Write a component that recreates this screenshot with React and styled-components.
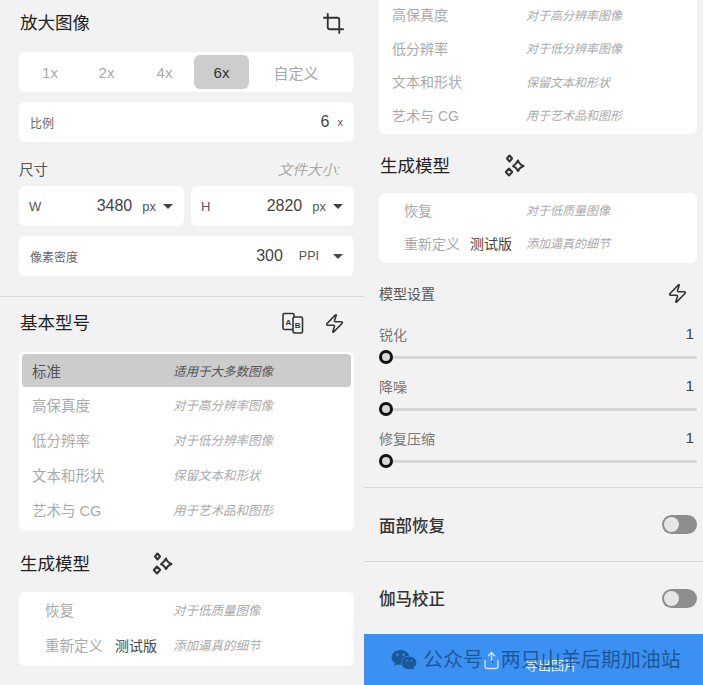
import styled, { createGlobalStyle } from 'styled-components';
import { Crop, Zap, Share } from 'lucide-react';
import { FaWeixin } from 'react-icons/fa';

const baseModels = [
  { name: '标准', desc: '适用于大多数图像', active: true },
  { name: '高保真度', desc: '对于高分辨率图像' },
  { name: '低分辨率', desc: '对于低分辨率图像' },
  { name: '文本和形状', desc: '保留文本和形状' },
  { name: '艺术与 CG', desc: '用于艺术品和图形' },
];
const genModels = [
  { name: '恢复', desc: '对于低质量图像' },
  { name: '重新定义', desc: '添加逼真的细节', badge: '测试版' },
];
const sliders = ['锐化', '降噪', '修复压缩'];

const SparkIcon = ({ size = 24 }) => (
  <svg width={size} height={size} viewBox="0 0 24 24" fill="none" stroke="#333" strokeWidth="2" strokeLinejoin="round">
    <path d="M7.5 1.5 L10 4.5 L7.5 7.5 L5 4.5 Z" />
    <path d="M16 6.5 Q17 10 21.5 12 Q17.5 13.5 16 17 Q14.5 13.5 11 12 Q14.5 10 16 6.5 Z" />
    <path d="M7 14.5 L10.2 18 L7 21.5 L3.8 18 Z" />
  </svg>
);

const TranslateIcon = () => (
  <svg width="22" height="22" viewBox="0 0 22 22" fill="none" stroke="#333" strokeWidth="1.6">
    <rect x="1" y="1.5" width="11" height="16" rx="1.5" />
    <rect x="11" y="5" width="9.5" height="16" rx="1.5" fill="#f2f2f2" />
    <text x="3.4" y="12.5" fontSize="8" fontWeight="700" fill="#333" stroke="none" fontFamily="Liberation Sans">A</text>
    <text x="12.8" y="16" fontSize="8" fontWeight="700" fill="#333" stroke="none" fontFamily="Liberation Sans">B</text>
  </svg>
);

const ModelList = ({ items, compact, right }) => (
  <ModelCard $compact={compact} $right={right}>
    {items.map(item => (
      <ModelRow key={item.name} $active={item.active} $right={right}>
        <ModelName $active={item.active} $indent={compact} $right={right}>
          {item.name}
          {item.badge && <Badge $right={right}>{item.badge}</Badge>}
        </ModelName>
        <ModelDesc $active={item.active} $right={right}>{item.desc}</ModelDesc>
      </ModelRow>
    ))}
  </ModelCard>
);

const App = () => {
  return (
    <>
      <GlobalStyle />
      <Page>
        <LeftColumn>
          <TopSection>
            <Header>
              <Title>放大图像</Title>
              <Crop size={23} color="#333" strokeWidth={1.9} />
            </Header>
            <Segment>
              <SegmentItem $w={56}>1x</SegmentItem>
              <SegmentItem $w={57}>2x</SegmentItem>
              <SegmentItem $w={59}>4x</SegmentItem>
              <SegmentItem $w={55} $active>6x</SegmentItem>
              <SegmentItem $w={94}>自定义</SegmentItem>
            </Segment>
            <FieldCard>
              <FieldLabel>比例</FieldLabel>
              <ValueGroup>
                <Value>6</Value>
                <Unit $small>x</Unit>
              </ValueGroup>
            </FieldCard>
            <SizeHeader>
              <SizeLabel>尺寸</SizeLabel>
              <FileSize>文件大小:</FileSize>
            </SizeHeader>
            <SizeRow>
              <SizeField>
                <SizeName>W</SizeName>
                <ValueGroup>
                  <Value>3480</Value>
                  <Unit>px</Unit>
                  <Caret />
                </ValueGroup>
              </SizeField>
              <SizeField>
                <SizeName>H</SizeName>
                <ValueGroup>
                  <Value>2820</Value>
                  <Unit>px</Unit>
                  <Caret />
                </ValueGroup>
              </SizeField>
            </SizeRow>
            <FieldCard>
              <FieldLabel>像素密度</FieldLabel>
              <ValueGroup>
                <Value>300</Value>
                <PpiUnit>PPI</PpiUnit>
                <Caret />
              </ValueGroup>
            </FieldCard>
          </TopSection>
          <ModelSection>
            <ModelHeader>
              <Title>基本型号</Title>
              <HeaderIcons>
                <TranslateIcon />
                <Zap size={21} color="#333" strokeWidth={1.8} />
              </HeaderIcons>
            </ModelHeader>
            <ModelList items={baseModels} />
            <GenHeader>
              <Title>生成模型</Title>
              <SparkIcon />
            </GenHeader>
            <ModelList items={genModels} compact />
          </ModelSection>
        </LeftColumn>

        <RightColumn>
          <RightTop>
            <ModelCardTop>
              {baseModels.slice(1).map(item => (
                <ModelRowTop key={item.name}>
                  <ModelName $right>{item.name}</ModelName>
                  <ModelDesc $right>{item.desc}</ModelDesc>
                </ModelRowTop>
              ))}
            </ModelCardTop>
            <GenHeaderRight>
              <Title>生成模型</Title>
              <SparkIcon />
            </GenHeaderRight>
            <ModelList items={genModels} compact right />
            <SettingsHeader>
              <SettingsTitle>模型设置</SettingsTitle>
              <Zap size={21} color="#333" strokeWidth={1.8} />
            </SettingsHeader>
            {sliders.map(name => (
              <SliderBlock key={name}>
                <SliderHead>
                  <SliderLabel>{name}</SliderLabel>
                  <SliderValue>1</SliderValue>
                </SliderHead>
                <SliderTrack>
                  <SliderKnob />
                </SliderTrack>
              </SliderBlock>
            ))}
          </RightTop>
          <ToggleSection>
            <ToggleTitle>面部恢复</ToggleTitle>
            <Toggle />
          </ToggleSection>
          <ToggleSection $last>
            <ToggleTitle>伽马校正</ToggleTitle>
            <Toggle />
          </ToggleSection>
          <ExportBar>
            <ExportIcon>
              <Share size={19} color="#cfe4fb" strokeWidth={1.8} />
            </ExportIcon>
            <ExportText>导出图片</ExportText>
            <Watermark>
              <FaWeixin size={26} />
              <WatermarkText>公众号 · 两只山羊后期加油站</WatermarkText>
            </Watermark>
          </ExportBar>
        </RightColumn>
      </Page>
    </>
  );
};

export default App;

//style
const FONT = `"Liberation Sans", "Noto Sans CJK SC", sans-serif`;

const GlobalStyle = createGlobalStyle`
  html, body {
    margin: 0;
    background: #f2f2f2;
    font-family: ${FONT};
  }
  * { box-sizing: border-box; }
`;
const Page = styled.div`
  width: 703px;
  height: 685px;
  display: grid;
  grid-template-columns: 364px 339px;
  overflow: hidden;
  background: #f2f2f2;
  color: #333;
`;
const LeftColumn = styled.div`
  display: flex;
  flex-direction: column;
`;
const TopSection = styled.div`
  height: 297px;
  padding: 0 10px 0 19px;
  border-bottom: 1px solid #d6d6d6;
`;
const Header = styled.div`
  height: 52px;
  padding: 0 9px 6px 0;
  display: flex;
  align-items: center;
  justify-content: space-between;
`;
const Title = styled.div`
  padding: 0 0 3px 1px;
  font-size: 17.5px;
  font-weight: 400;
  color: #222;
`;
const Segment = styled.div`
  height: 40px;
  padding: 3px 0 3px 3px;
  display: flex;
  background: #fff;
  border-radius: 6px;
`;
const SegmentItem = styled.div`
  width: ${p => p.$w}px;
  display: flex;
  align-items: center;
  justify-content: center;
  font-size: 15px;
  border-radius: 6px;
  color: ${p => (p.$active ? '#333' : '#a8a8a8')};
  background: ${p => (p.$active ? '#cdcdcd' : 'transparent')};
`;
const FieldCard = styled.div`
  height: 40px;
  margin-top: 10px;
  padding: 0 11px 0 11px;
  display: flex;
  align-items: center;
  justify-content: space-between;
  background: #fff;
  border-radius: 6px;
`;
const FieldLabel = styled.div`
  font-size: 12px;
  color: #666;
`;
const ValueGroup = styled.div`
  display: flex;
  align-items: center;
`;
const Value = styled.div`
  font-size: 16px;
  color: #444;
`;
const Unit = styled.div`
  margin-left: ${p => (p.$small ? '8px' : '10px')};
  font-size: ${p => (p.$small ? '11px' : '13px')};
  color: #555;
`;
const PpiUnit = styled.div`
  margin: 0 7px 0 16px;
  font-size: 12.5px;
  color: #555;
`;
const Caret = styled.div`
  margin-left: 7px;
  width: 0;
  height: 0;
  border-left: 5px solid transparent;
  border-right: 5px solid transparent;
  border-top: 5.5px solid #444;
`;
const SizeHeader = styled.div`
  height: 44px;
  padding: 9px 14px 0 0;
  display: flex;
  align-items: center;
  justify-content: space-between;
`;
const SizeLabel = styled.div`
  font-size: 14.5px;
  color: #555;
`;
const FileSize = styled.div`
  font-size: 14.5px;
  font-style: italic;
  color: #aaa;
`;
const SizeRow = styled.div`
  display: grid;
  grid-template-columns: 165px 163px;
  gap: 7px;
`;
const SizeField = styled.div`
  height: 40px;
  padding: 0 11px 0 10px;
  display: flex;
  align-items: center;
  justify-content: space-between;
  background: #fff;
  border-radius: 6px;
`;
const SizeName = styled.div`
  font-size: 13px;
  color: #555;
`;
const ModelSection = styled.div`
  padding: 0 10px 0 19px;
`;
const ModelHeader = styled.div`
  height: 55px;
  padding: 0 9px 3px 0;
  display: flex;
  align-items: center;
  justify-content: space-between;
`;
const HeaderIcons = styled.div`
  display: flex;
  align-items: center;
  gap: 20px;
`;
const ModelCard = styled.div`
  padding: ${p => (p.$compact ? '0 3px 4px' : '2px 3px 4px')};
  background: #fff;
  border-radius: 6px;
`;
const ModelRow = styled.div`
  height: ${p => (p.$active ? '33px' : p.$right ? '33px' : '35px')};
  padding-left: 10px;
  display: grid;
  grid-template-columns: ${p => (p.$right ? '134px' : '141px')} 1fr;
  align-items: center;
  border-radius: 4px;
  background: ${p => (p.$active ? '#cccccc' : 'transparent')};
`;
const ModelName = styled.div`
  padding-left: ${p => (p.$indent ? (p.$right ? '12px' : '13px') : '0')};
  display: flex;
  align-items: center;
  font-size: ${p => (p.$right ? '14px' : '14.5px')};
  white-space: nowrap;
  color: ${p => (p.$active ? '#555' : '#aaa')};
`;
const Badge = styled.span`
  margin-left: ${p => (p.$right ? '10px' : '12px')};
  font-size: 14px;
  color: #444;
`;
const ModelDesc = styled.div`
  font-size: ${p => (p.$right ? '12px' : '12.5px')};
  font-style: italic;
  white-space: nowrap;
  color: ${p => (p.$active ? '#555' : '#aaa')};
`;
const GenHeader = styled.div`
  height: 61px;
  padding-top: 4px;
  display: flex;
  align-items: center;
  gap: 60px;
`;
const RightColumn = styled.div`
  position: relative;
  display: flex;
  flex-direction: column;
`;
const RightTop = styled.div`
  height: 488px;
  padding: 0 6px 0 15px;
  border-bottom: 1px solid #d6d6d6;
`;
const ModelCardTop = styled.div`
  height: 134px;
  padding: 0 13px;
  background: #fff;
  border-radius: 0 0 6px 6px;
`;
const ModelRowTop = styled.div`
  height: 33.5px;
  padding-bottom: 5px;
  display: grid;
  grid-template-columns: 134px 1fr;
  align-items: center;
`;
const GenHeaderRight = styled(GenHeader)`
  height: 59px;
  padding-top: 5px;
  gap: 52px;
`;
const SettingsHeader = styled.div`
  height: 63px;
  padding: 0 9px 3px 0;
  display: flex;
  align-items: center;
  justify-content: space-between;
`;
const SettingsTitle = styled.div`
  font-size: 14px;
  color: #555;
`;
const SliderBlock = styled.div`
  height: 52px;
`;
const SliderHead = styled.div`
  height: 30px;
  padding: 0 3px 14px 0;
  display: flex;
  align-items: center;
  justify-content: space-between;
`;
const SliderLabel = styled.div`
  font-size: 14px;
  color: #777;
`;
const SliderValue = styled.div`
  font-size: 15.5px;
  color: #444;
`;
const SliderTrack = styled.div`
  height: 3px;
  position: relative;
  background: #d6d6d6;
  border-radius: 2px;
`;
const SliderKnob = styled.div`
  position: absolute;
  left: 0;
  top: -6px;
  width: 14px;
  height: 14px;
  background: #d8d8d8;
  border: 3px solid #111;
  border-radius: 50%;
`;
const ToggleSection = styled.div`
  height: ${p => (p.$last ? '72px' : '74px')};
  padding: 0 6px 0 15px;
  display: flex;
  align-items: center;
  justify-content: space-between;
  border-bottom: ${p => (p.$last ? 'none' : '1px solid #d6d6d6')};
`;
const ToggleTitle = styled.div`
  font-size: 16.5px;
  font-weight: 500;
  color: #333;
`;
const Toggle = styled.div`
  width: 35px;
  height: 19px;
  padding: 2px;
  background: #8e8e8e;
  border-radius: 10px;
  &::before {
    content: '';
    display: block;
    width: 15px;
    height: 15px;
    background: #e6e6e6;
    border-radius: 50%;
  }
`;
const ExportBar = styled.div`
  flex: 1;
  position: relative;
  background: #3b90f2;
`;
const ExportIcon = styled.div`
  position: absolute;
  left: 118px;
  top: 17px;
`;
const ExportText = styled.div`
  position: absolute;
  left: 161px;
  top: 21px;
  font-size: 13px;
  color: #e2effd;
`;
const Watermark = styled.div`
  position: absolute;
  left: 27px;
  top: 10px;
  display: flex;
  align-items: center;
  gap: 6px;
  color: rgba(20, 75, 135, 0.82);
`;
const WatermarkText = styled.div`
  padding-bottom: 3px;
  font-size: 20px;
  white-space: nowrap;
`;
